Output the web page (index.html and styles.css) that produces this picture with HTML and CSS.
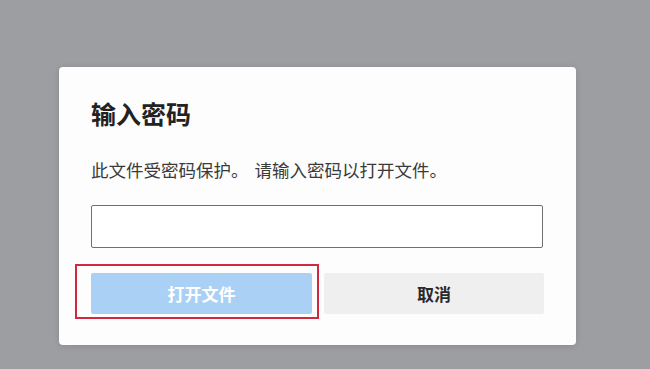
FILE: index.html
```html
<!DOCTYPE html>
<html lang="zh-CN">
<head>
<meta charset="utf-8">
<title>输入密码</title>
<link rel="stylesheet" href="styles.css">
</head>
<body>
<div class="dialog">
  <h1 class="title">输入密码</h1>
  <p class="desc">此文件受密码保护。 请输入密码以打开文件。</p>
  <div class="field"></div>
  <div class="actions">
    <div class="highlight">
      <button class="btn btn-primary">打开文件</button>
    </div>
    <button class="btn btn-cancel">取消</button>
  </div>
</div>
</body>
</html>
```

FILE: styles.css
```css
html, body {
  margin: 0;
  padding: 0;
}
body {
  width: 650px;
  height: 369px;
  background: #9d9ea1;
  font-family: "Noto Sans CJK SC", "Noto Sans", sans-serif;
  overflow: hidden;
  padding-top: 67px;
  box-sizing: border-box;
}
.dialog {
  margin-left: 59px;
  width: 517px;
  height: 278px;
  box-sizing: border-box;
  background: #fdfdfd;
  border-radius: 4px;
  padding: 31px 32px 31px 32px;
  box-shadow: 0 1px 6px rgba(0,0,0,0.12);
}
.title {
  margin: 0;
  font-size: 25px;
  line-height: 30px;
  font-weight: 700;
  color: #222;
}
.desc {
  margin: 30px 0 0 0;
  font-size: 17.5px;
  line-height: 24px;
  word-spacing: 2px;
  color: #3a3a3a;
}
.field {
  margin-top: 23px;
  height: 43px;
  width: 452px;
  box-sizing: border-box;
  border: 1.5px solid #6f6f6f;
  border-radius: 2px;
  background: #fff;
}
.actions {
  margin-top: 25px;
  display: flex;
  gap: 12px;
}
.highlight {
  position: relative;
  display: flex;
}
.highlight::after {
  content: "";
  position: absolute;
  top: -9px;
  left: -16px;
  right: -7px;
  bottom: -5px;
  border: 2px solid #d2283f;
  pointer-events: none;
}
.btn {
  height: 41px;
  border: none;
  border-radius: 2px;
  font-family: "Noto Sans CJK SC", "Noto Sans", sans-serif;
  font-size: 17px;
  font-weight: 700;
  padding: 0;
}
.btn-primary {
  width: 221px;
  background: #abd0f6;
  color: #fff;
}
.btn-cancel {
  width: 220px;
  background: #efefef;
  color: #2a2a2a;
}
```
